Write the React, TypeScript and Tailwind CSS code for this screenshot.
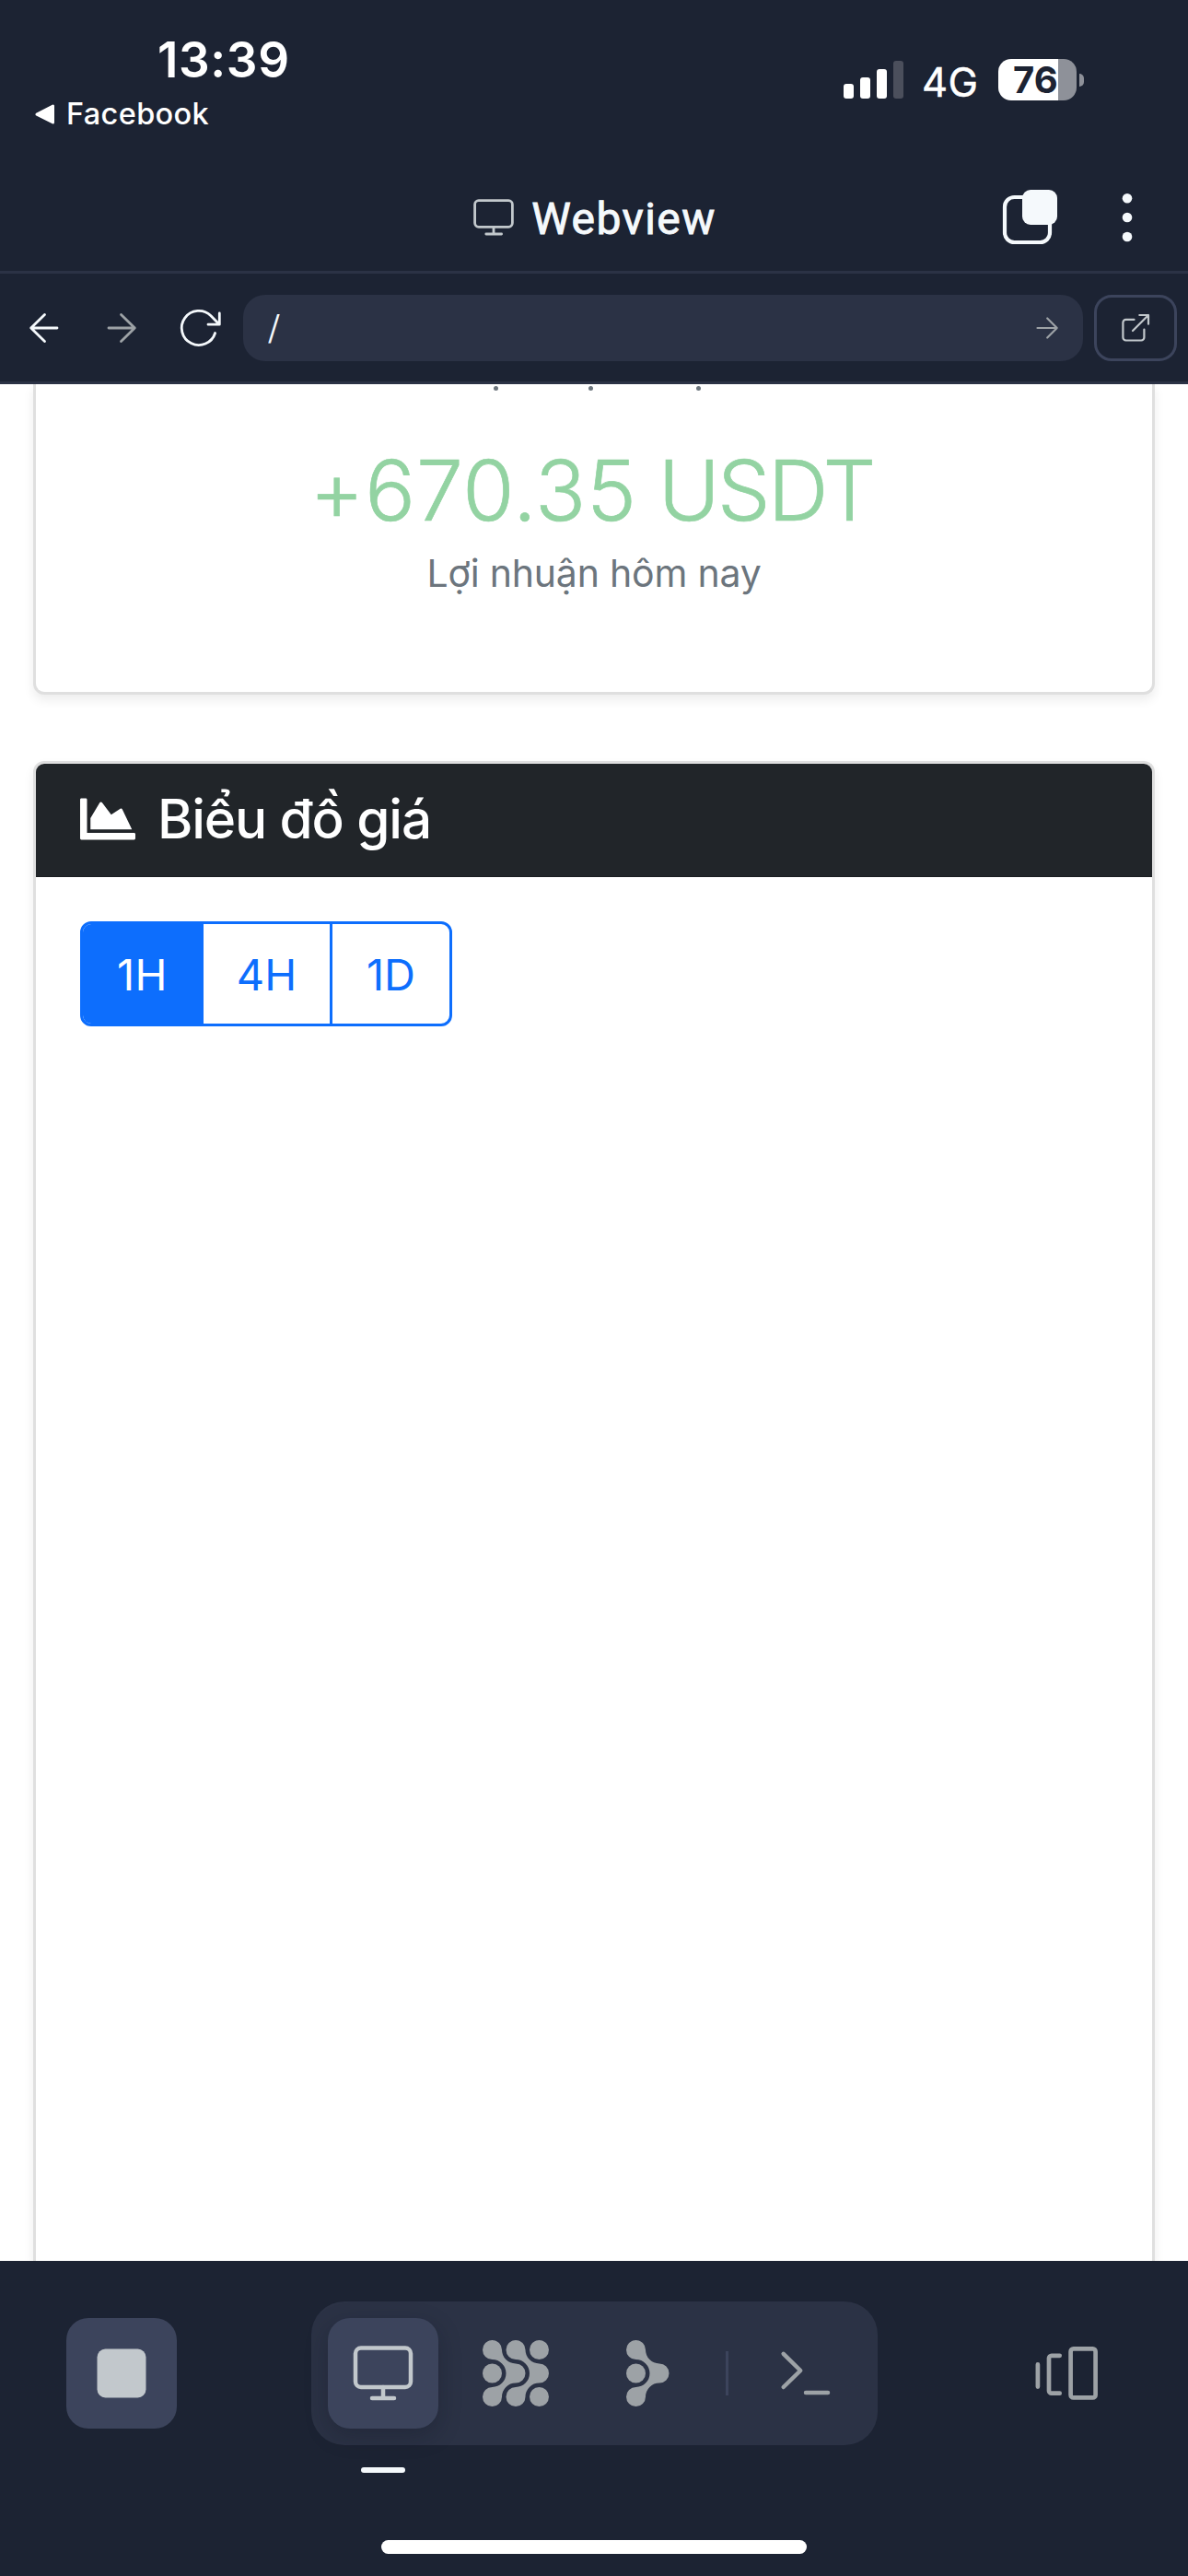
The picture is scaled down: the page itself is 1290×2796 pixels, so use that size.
import type { ReactNode } from 'react';
import { FaChartArea } from 'react-icons/fa';

const BLOB =
  'M63 31.5A45 45 0 0 0 108 76.5A31.5 31.5 0 0 1 108 139.5A45 45 0 0 0 63 184.5A31.5 31.5 0 1 1 31.5 153A45 45 0 0 0 31.5 63A31.5 31.5 0 1 1 63 31.5Z';

function StatusBar() {
  return (
    <div className="flex h-[174px] justify-between font-[Inter,sans-serif] text-white">
      <div className="pt-[44px]">
        <div className="ml-[171px] text-[53px] leading-[42px] font-semibold tracking-[0.6px]">13:39</div>
        <div className="mt-[21px] ml-[38px] flex h-[34px] items-center">
          <svg width="22" height="22" viewBox="0 0 22 22">
            <path d="M2 11.2L19.5 2V20Z" fill="white" stroke="white" strokeWidth="3" strokeLinejoin="round" />
          </svg>
          <span className="ml-[12px] text-[32.5px] leading-[34px] font-medium tracking-[0.35px]">Facebook</span>
        </div>
      </div>
      <div className="mt-[64px] mr-[113px] flex h-[45px] items-center">
        <svg width="65" height="45" viewBox="0 0 65 45" fill="white">
          <rect x="0" y="27" width="11" height="16" rx="3" />
          <rect x="18" y="20" width="11" height="23" rx="3" />
          <rect x="36" y="11" width="11" height="32" rx="3" />
          <rect x="54" y="2" width="11" height="41" rx="3" fill="#4b4f5c" />
        </svg>
        <span className="ml-[20px] w-[62px] pt-[5px] text-[43.5px] leading-[45px] tracking-[0.5px] [-webkit-text-stroke:0.5px_white]">4G</span>
        <div className="ml-[21px] h-[45px] w-[85px] rounded-[14px] bg-[linear-gradient(90deg,#ffffff_65px,#8e9199_65px)] pl-[16px] text-[40px] leading-[45px] font-bold text-[#1c2333]">
          76
        </div>
        <div className="ml-[3px] h-[14px] w-[5px] rounded-r-full bg-[#8e9199]" />
      </div>
    </div>
  );
}

function TitleBar() {
  return (
    <div className="relative flex h-[123px] items-center justify-center gap-[19px] border-b-[3px] border-[#2b3245] pl-[2px]">
      <svg className="mt-[4px]" width="44" height="40" viewBox="0 0 44 40" fill="none" stroke="#c2c8cc" strokeWidth="2.8" strokeLinecap="round">
        <rect x="1.6" y="1.7" width="40.8" height="28.6" rx="4.2" />
        <path d="M22 30.5V38M13.8 38H30.6" />
      </svg>
      <span className="mt-[8px] font-[Roboto,sans-serif] text-[48px] leading-[60px] font-[450] tracking-[1.4px] text-[#f5f9fc] [-webkit-text-stroke:0.9px_#f5f9fc]">
        Webview
      </span>
      <div className="absolute top-[30px] right-[52px] flex items-center gap-[61px]">
        <svg width="62" height="62" viewBox="0 0 62 62">
          <rect x="4" y="10" width="49" height="49" rx="10.5" fill="none" stroke="#f5f9fc" strokeWidth="4.2" />
          <rect x="23" y="2" width="38" height="38" rx="9" fill="#f5f9fc" />
        </svg>
        <svg width="28" height="62" viewBox="0 0 28 62" fill="#f5f9fc">
          <circle cx="14" cy="11.2" r="5.3" />
          <circle cx="14" cy="32" r="5.3" />
          <circle cx="14" cy="53" r="5.3" />
        </svg>
      </div>
    </div>
  );
}

function AddressBar() {
  return (
    <div className="flex h-[120px] items-center border-b-[3px] border-[#2b3245] pt-[1px] pr-[12px] pl-[6px]">
      <button className="flex w-[84px] justify-center">
        <svg width="36" height="36" viewBox="0 0 36 36" fill="none" stroke="#f5f9fc" strokeWidth="2.8" strokeLinecap="round" strokeLinejoin="round">
          <path d="M32 18H3.7M18.5 3.5L3.7 18L18.5 32.5" />
        </svg>
      </button>
      <button className="flex w-[84px] justify-center">
        <svg width="36" height="36" viewBox="0 0 36 36" fill="none" stroke="#9da2a6" strokeWidth="2.8" strokeLinecap="round" strokeLinejoin="round">
          <path d="M4 18H32.3M17.5 3.5L32.3 18L17.5 32.5" />
        </svg>
      </button>
      <button className="mr-[2px] flex w-[88px] justify-center">
        <svg width="48" height="48" viewBox="0 0 48 48" fill="none" stroke="#f5f9fc" strokeWidth="2.8" strokeLinecap="round" strokeLinejoin="round">
          <path d="M39.6 29.5A18.6 18.6 0 1 1 35 10.8L44 20M44.3 8V20.2H32" />
        </svg>
      </button>
      <div className="flex h-[72px] flex-1 items-center justify-between rounded-[24px] bg-[#2b3245] pr-[25px] pl-[27px]">
        <span className="inline-block origin-left scale-x-80 font-[Roboto,sans-serif] text-[41px] leading-[50px] font-normal text-[#f5f9fc]">
          /
        </span>
        <svg width="28" height="28" viewBox="0 0 28 28" fill="none" stroke="#9da2a6" strokeWidth="2.2" strokeLinecap="round" strokeLinejoin="round">
          <path d="M3.5 14H24.7M14.2 3.5L24.7 14L14.2 24.5" />
        </svg>
      </div>
      <button className="ml-[12px] flex h-[72px] w-[90px] items-center justify-center rounded-[19px] border-[3px] border-[#3c445c]">
        <svg width="36" height="36" viewBox="0 0 36 36" fill="none" stroke="#c2c8cc" strokeWidth="2.2" strokeLinecap="round" strokeLinejoin="round">
          <path d="M16.5 8.9H7.6A3.2 3.2 0 0 0 4.4 12.1V28.3A3.2 3.2 0 0 0 7.6 31.5H24.2A3.2 3.2 0 0 0 27.4 28.3V19.6M15 21L32 4M22.3 4H32V13.7" />
        </svg>
      </button>
    </div>
  );
}

function ProfitCard() {
  return (
    <section className="flex h-[337px] flex-col items-center rounded-b-[12px] border-x-[3px] border-b-[3px] border-[#dfdfdf] bg-white text-center shadow-[0_6px_12px_rgba(0,0,0,0.075)]">
      {/* Under-dots of the caption scrolled beneath the toolbar */}
      <div className="flex h-[7px] w-full items-end pl-[496.5px]">
        <i className="size-[5px] rounded-full bg-[#6c757d]" />
        <i className="ml-[98.5px] size-[5px] rounded-full bg-[#6c757d]" />
        <i className="ml-[111.5px] size-[5px] rounded-full bg-[#6c757d]" />
      </div>
      <div className="mt-[58px] pr-[5px] text-[91px] leading-[100px] font-light tracking-[-2.6px] text-[#93d3a2] [-webkit-text-stroke:0.7px_#93d3a2]">
        <span className="tracking-[0.8px]">+670.35</span> USDT
      </div>
      <div className="mt-[15px] text-[41px] leading-[50px] tracking-[-0.2px] text-[#6c757d]">Lợi nhuận hôm nay</div>
    </section>
  );
}

function ChartCard() {
  return (
    <section className="mt-[72px] flex-1 rounded-t-[12px] border-x-[3px] border-t-[3px] border-[#dfdfdf] bg-white shadow-[0_6px_12px_rgba(0,0,0,0.075)]">
      <h2 className="flex h-[123px] items-center rounded-t-[9px] border-b border-[#1a1d21] bg-[#212529] pl-[48px] text-white">
        <FaChartArea size={60} className="-mt-[2px]" />
        <span className="-mt-[3px] ml-[24px] text-[58.5px] leading-[70px] font-medium tracking-[-1.15px]">Biểu đồ giá</span>
      </h2>
      <div className="mt-[48px] ml-[48px] flex h-[114px] w-[404px] overflow-hidden rounded-[12px] border-[3px] border-[#0d6efd] text-[47px] leading-[109px] text-[#0d6efd]">
        <button className="h-full w-[131px] bg-[#0d6efd] pr-[2px] tracking-[0.5px] text-white">1H</button>
        <button className="h-full w-[140px] border-r-[3px] border-[#0d6efd]">4H</button>
        <button className="h-full w-[127px]">1D</button>
      </div>
    </section>
  );
}

function DockTab({ active = false, children }: { active?: boolean; children: ReactNode }) {
  return (
    <button
      className={
        active
          ? 'relative flex size-[120px] items-center justify-center rounded-[24px] bg-[#3c445c] shadow-[0_8px_24px_rgba(10,14,28,0.25)]'
          : 'flex size-[120px] items-center justify-center'
      }
    >
      {children}
      {active && <span className="absolute -bottom-[48px] left-[36px] h-[6px] w-[48px] rounded-[3px] bg-[#f5f9fc]" />}
    </button>
  );
}

function Dock() {
  return (
    <footer className="h-[342px] bg-[#1c2333]">
      <div className="flex items-center justify-between px-[72px] pt-[44px]">
        <button className="flex size-[120px] items-center justify-center rounded-[24px] bg-[#3c445c]">
          <svg width="54" height="54" viewBox="0 0 54 54" fill="#c2c8cc">
            <rect x="0.5" y="0.5" width="53" height="53" rx="9" />
          </svg>
        </button>
        <nav className="flex h-[156px] w-[615px] items-center gap-[24px] rounded-[36px] bg-[#2b3245] px-[18px]">
          <DockTab active>
            <svg className="overflow-visible" width="66" height="60" viewBox="0 0 66 60" fill="none" stroke="#c2c8cc" strokeWidth="4.5" strokeLinecap="round">
              <rect x="3" y="2.5" width="60" height="42.5" rx="6" />
              <path d="M33 45V57M21 57H45" />
            </svg>
          </DockTab>
          <DockTab>
            <svg width="72" height="72" viewBox="0 0 216 216" fill="#9da2a6">
              <path d={BLOB} />
              <path d={BLOB} transform="translate(76.5 0)" />
              <circle cx="31.5" cy="108" r="31.5" />
              <circle cx="184.5" cy="31.5" r="31.5" />
              <circle cx="184.5" cy="184.5" r="31.5" />
            </svg>
          </DockTab>
          <DockTab>
            <svg width="46.5" height="72" viewBox="0 0 139.5 216" fill="#9da2a6">
              <path d={BLOB} />
              <circle cx="31.5" cy="108" r="31.5" />
            </svg>
          </DockTab>
          <span className="h-[48px] w-[3px] bg-[#3c445c]" />
          <DockTab>
            <svg width="72" height="72" viewBox="0 0 72 72" fill="none" stroke="#9da2a6" strokeWidth="4.5" strokeLinecap="round" strokeLinejoin="round">
              <path d="M11.7 14.8L30.2 33L11.7 51M36 57H60" />
            </svg>
          </DockTab>
        </nav>
        <button className="flex size-[120px] items-center justify-center">
          <svg width="72" height="72" viewBox="0 0 72 72" fill="none" stroke="#9da2a6" strokeWidth="4.7" strokeLinecap="round" strokeLinejoin="round">
            <path d="M4.9 26.4V50.6M28.7 16.8H19.8A2.8 2.8 0 0 0 17 19.6V54.9A2.8 2.8 0 0 0 19.8 57.7H28.7" />
            <rect x="40.6" y="9.4" width="27" height="53" rx="3" />
          </svg>
        </button>
      </div>
      <div className="mx-auto mt-[103px] h-[15px] w-[462px] rounded-full bg-white" />
    </footer>
  );
}

export default function App() {
  return (
    <div className="flex h-[2796px] w-[1290px] flex-col overflow-hidden bg-white">
      <header className="h-[417px] bg-[#1c2333]">
        <StatusBar />
        <TitleBar />
        <AddressBar />
      </header>
      <main className="flex h-[2037px] flex-col overflow-hidden px-[36px] font-[Inter,sans-serif]">
        <ProfitCard />
        <ChartCard />
      </main>
      <Dock />
    </div>
  );
}
